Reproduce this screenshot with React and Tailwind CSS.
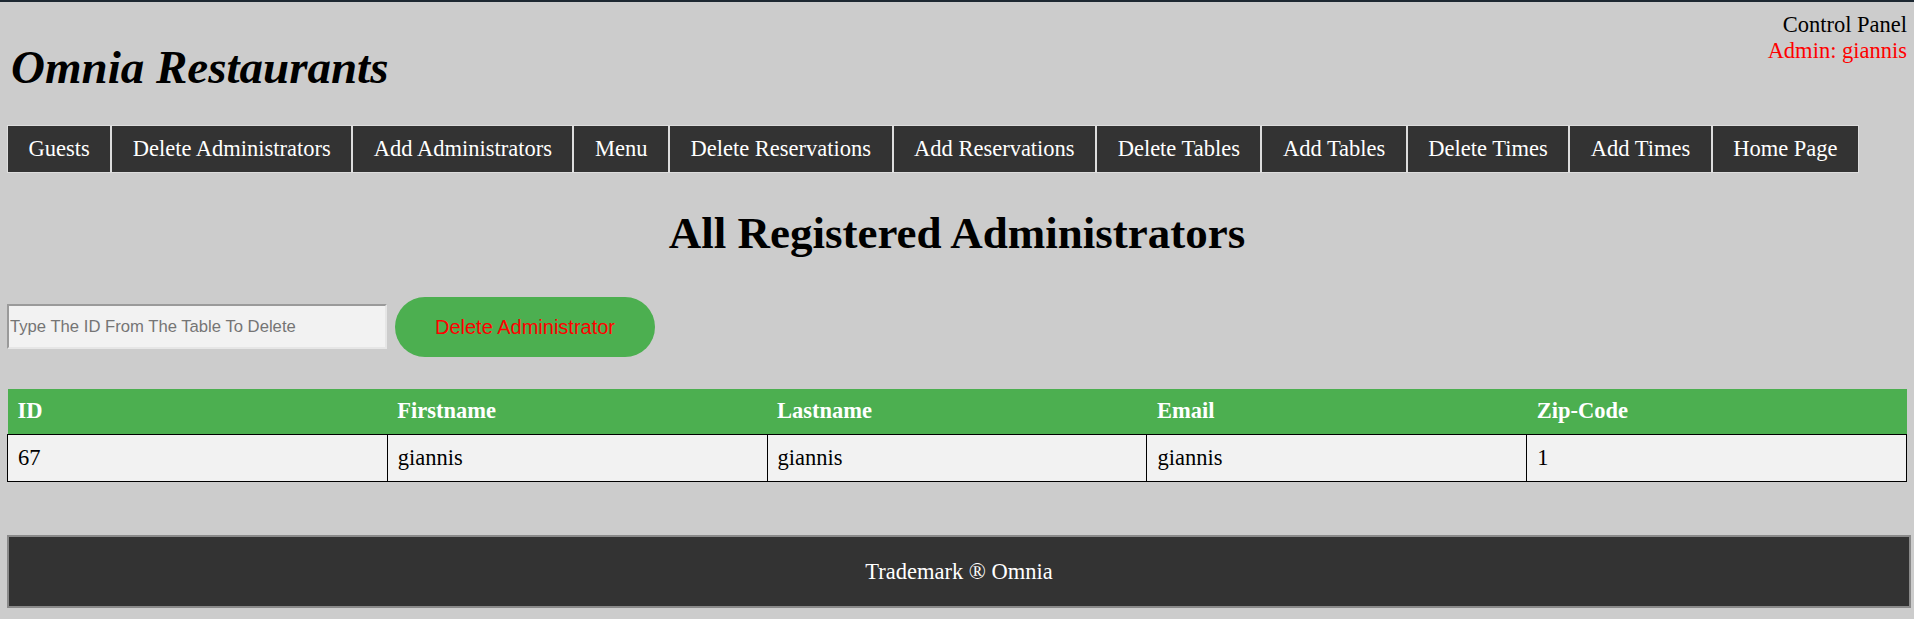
import React from 'react';

const NAV_LINKS = [
  'Guests',
  'Delete Administrators',
  'Add Administrators',
  'Menu',
  'Delete Reservations',
  'Add Reservations',
  'Delete Tables',
  'Add Tables',
  'Delete Times',
  'Add Times',
  'Home Page',
];

const COLUMNS = ['ID', 'Firstname', 'Lastname', 'Email', 'Zip-Code'];

const ADMINS = [
  { id: 67, firstname: 'giannis', lastname: 'giannis', email: 'giannis', zip: '1' },
];

export default function App() {
  return (
    <div className="min-h-[619px] bg-[#cccccc] font-['Liberation_Serif','Times_New_Roman',serif] text-black">
      <div className="h-[2px] bg-[#1c2731]" />

      {/* Header */}
      <div className="flex items-start justify-between px-[7px]">
        <h1 className="mt-[42px] pl-[4px] text-[47px] leading-none font-bold italic">
          Omnia Restaurants
        </h1>
        <div className="mt-[9.5px] text-right text-[22.5px] leading-[26px]">
          <div>Control Panel</div>
          <div className="text-[#ff0000]">Admin: giannis</div>
        </div>
      </div>

      {/* Nav */}
      <ul className="mt-[33.5px] flex px-[7px]">
        {NAV_LINKS.map((link) => (
          <li key={link}>
            <a className="flex h-[48px] items-center border border-[#dddddd] bg-[#333333] px-[20.5px] text-[22.5px] text-white">
              {link}
            </a>
          </li>
        ))}
      </ul>

      <h2 className="mt-[38px] text-center text-[45px] leading-none font-bold">
        All Registered Administrators
      </h2>

      {/* Delete form */}
      <div className="mt-[41px] flex items-center px-[7px]">
        <input
          type="text"
          placeholder="Type The ID From The Table To Delete"
          className="h-[45px] w-[380px] border-2 border-t-[#9a9a9a] border-l-[#9a9a9a] border-r-[#e6e6e6] border-b-[#e6e6e6] bg-[#f2f2f2] pl-[1px] font-['Liberation_Sans',Arial,sans-serif] text-[16.67px] placeholder:text-[#757575] outline-none"
        />
        <button className="ml-[8px] h-[60px] w-[260px] rounded-full bg-[#4caf50] font-['Liberation_Sans',Arial,sans-serif] text-[20px] text-[#ff0000]">
          Delete Administrator
        </button>
      </div>

      {/* Table */}
      <div className="mt-[32px] px-[7px]">
        <table className="w-full table-fixed border-collapse text-[22.5px]">
          <thead>
            <tr>
              {COLUMNS.map((col) => (
                <th key={col} className="h-[46px] bg-[#4caf50] pl-[10px] text-left font-bold text-white">
                  {col}
                </th>
              ))}
            </tr>
          </thead>
          <tbody>
            {ADMINS.map((a) => (
              <tr key={a.id}>
                {[a.id, a.firstname, a.lastname, a.email, a.zip].map((v, i) => (
                  <td key={i} className="h-[47px] border border-black bg-[#f2f2f2] pl-[10px]">
                    {v}
                  </td>
                ))}
              </tr>
            ))}
          </tbody>
        </table>
      </div>

      {/* Footer */}
      <div className="mt-[53px] pl-[7px] pr-[3px]">
        <footer className="flex h-[73px] items-center justify-center border-2 border-[#8a8a8a] bg-[#333333] text-[22.5px] text-white">
          Trademark ® Omnia
        </footer>
      </div>
    </div>
  );
}
